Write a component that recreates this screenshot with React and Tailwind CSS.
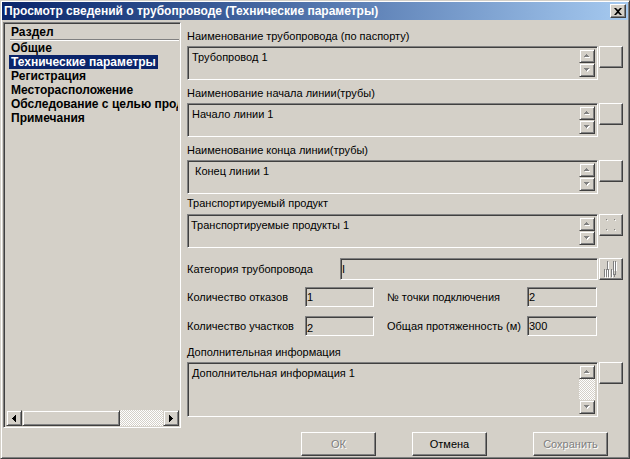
const sunken =
  "border border-t-[#808080] border-l-[#808080] border-b-white border-r-white shadow-[inset_1px_1px_0_#404040]"
const raised =
  "border border-t-white border-l-white border-b-[#404040] border-r-[#404040] shadow-[inset_-1px_-1px_0_#808080]"
const scrollBtn =
  "border border-t-[#d4d0c8] border-l-[#d4d0c8] border-b-[#404040] border-r-[#404040] shadow-[inset_1px_1px_0_#fff,inset_-1px_-1px_0_#808080]"
const checker =
  "bg-[image:repeating-conic-gradient(#ffffff_0_25%,#d4d0c8_0_50%)] bg-[length:2px_2px]"

const sections = [
  "Общие",
  "Технические параметры",
  "Регистрация",
  "Месторасположение",
  "Обследование с целью продления",
  "Примечания",
]

const UpArrow = () => (
  <svg width="6" height="4" viewBox="0 0 6 4">
    <path d="M3 1h1v1h1v1h1v1H1V3h1V2h1z" fill="#ffffff" />
    <path d="M2 0h1v1h1v1h1v1H0V2h1V1h1z" fill="#808080" />
  </svg>
)

const DownArrow = () => (
  <svg width="6" height="4" viewBox="0 0 6 4">
    <path d="M1 1h5v1H5v1H4v1H3V3H2V2H1z" fill="#ffffff" />
    <path d="M0 0h5v1H4v1H3v1H2V2H1V1H0z" fill="#808080" />
  </svg>
)

const ScrollButton = ({ children }) => (
  <div className={`${scrollBtn} w-[16px] h-[14px] bg-[#d4d0c8] flex items-center justify-center`}>
    {children}
  </div>
)

const SideButton = ({ children }) => (
  <button className={`${raised} ml-[1px] w-[24px] h-[22px] bg-[#d4d0c8] flex items-center justify-center`}>
    {children}
  </button>
)

const Label = ({ children, className = "" }) => (
  <div className={`h-[14px] leading-[14px] whitespace-nowrap ${className}`}>{children}</div>
)

const Memo = ({ text, tall = false, button = null, indent = "pl-[4px]" }) => (
  <div className="flex">
    <div
      className={`${sunken} ${tall ? "h-[55px]" : "h-[34px]"} w-[411px] flex items-start pt-[2px] pr-[2px] bg-[#d4d0c8]`}
    >
      <div className={`flex-1 ${indent} pt-[1px] leading-[14px] whitespace-nowrap`}>{text}</div>
      <div className="flex flex-col">
        <ScrollButton>
          <UpArrow />
        </ScrollButton>
        {tall && <div className={`${checker} w-[16px] h-[21px]`} />}
        <ScrollButton>
          <DownArrow />
        </ScrollButton>
      </div>
    </div>
    {button || <SideButton />}
  </div>
)

const Field = ({ value, className }) => (
  <div className={`${sunken} ${className} bg-[#d4d0c8] pl-[1px] flex items-center leading-[14px]`}>{value}</div>
)

const DotsIcon = () => (
  <svg width="10" height="12" viewBox="0 0 10 12">
    <rect x="1" y="1" width="1" height="1" fill="#ffffff" />
    <rect x="9" y="1" width="1" height="1" fill="#ffffff" />
    <rect x="1" y="11" width="1" height="1" fill="#ffffff" />
    <rect x="9" y="11" width="1" height="1" fill="#ffffff" />
    <rect x="0" y="0" width="1" height="1" fill="#808080" />
    <rect x="8" y="0" width="1" height="1" fill="#808080" />
    <rect x="0" y="10" width="1" height="1" fill="#808080" />
    <rect x="8" y="10" width="1" height="1" fill="#808080" />
  </svg>
)

const NumeralIcon = () => (
  <svg width="14" height="17" viewBox="0 0 14 17">
    <g fill="#ffffff">
      <rect x="4" y="1" width="1" height="9" />
      <rect x="10" y="1" width="1" height="9" />
      <rect x="12" y="1" width="1" height="9" />
      <rect x="1" y="9" width="1" height="8" />
      <rect x="3" y="9" width="1" height="8" />
      <rect x="5" y="9" width="1" height="8" />
      <rect x="8" y="9" width="1" height="8" />
    </g>
    <g fill="#808080">
      <rect x="3" y="0" width="1" height="9" />
      <rect x="9" y="0" width="1" height="9" />
      <rect x="11" y="0" width="1" height="9" />
      <rect x="0" y="8" width="1" height="8" />
      <rect x="2" y="8" width="1" height="8" />
      <rect x="4" y="8" width="1" height="8" />
      <rect x="7" y="8" width="1" height="8" />
      <path d="M9 8h1v5h1V8h1v6h-1v2h-1v-2H9z" />
    </g>
  </svg>
)

const DialogButton = ({ children, disabled = false, className = "" }) => (
  <button
    className={`${raised} ${className} w-[75px] h-[24px] bg-[#d4d0c8] flex items-center justify-center leading-[14px] font-normal ${
      disabled ? "text-[#808080] [text-shadow:1px_1px_0_#ffffff]" : "text-black"
    }`}
  >
    {children}
  </button>
)

export default function App() {
  return (
    <div className="w-[630px] h-[459px] bg-[#d4d0c8] border border-t-[#d4d0c8] border-l-[#d4d0c8] border-b-[#404040] border-r-[#404040] shadow-[inset_1px_1px_0_#fff,inset_-1px_-1px_0_#808080] p-[1px] font-['Liberation_Sans',Arial,sans-serif] text-[11px] text-black overflow-hidden">
      {/* title bar */}
      <div className="h-[18px] bg-linear-to-r from-[#0a246a] to-[#a6caf0] flex items-center pl-[2px] pr-[2px]">
        <span className="flex-1 text-white font-bold text-[12px] leading-[18px] whitespace-nowrap">
          Просмотр сведений о трубопроводе (Технические параметры)
        </span>
        <button className={`${raised} w-[16px] h-[14px] bg-[#d4d0c8] flex items-center justify-center`}>
          <svg width="8" height="7" viewBox="0 0 8 7">
            <path d="M0 0h2l2 2 2-2h2L5 3.5 8 7H6L4 5 2 7H0l3-3.5z" fill="#000" />
          </svg>
        </button>
      </div>

      <div className="flex mt-[2px]">
        {/* sections list */}
        <div className={`${sunken} ml-[1px] w-[178px] h-[406px] flex flex-col pl-[2px] pr-[1px] pt-[1px] pb-[1px]`}>
          <div className="h-[15px] flex items-end pl-[5px] font-bold text-[12px] leading-[14px]">Раздел</div>
          <div className="ml-[4px] h-[2px] border-t border-t-[#808080] border-b border-b-white" />
          <div className="w-[172px] flex flex-col pl-[3px] overflow-hidden font-bold text-[12px]">
            {sections.map((s, i) => (
              <div key={s} className="h-[14px] leading-[14px] whitespace-nowrap overflow-hidden">
                <span className={`inline-block px-[2px] ${i === 1 ? "bg-[#0a246a] text-white" : ""}`}>{s}</span>
              </div>
            ))}
          </div>
          <div className="flex-1" />
          <div className="flex h-[16px]">
            <div className={`${scrollBtn} w-[16px] h-[16px] bg-[#d4d0c8] flex items-center justify-center`}>
              <svg width="4" height="7" viewBox="0 0 4 7">
                <path d="M3 0h1v7H3V6H2V5H1V4H0V3h1V2h1V1h1z" fill="#000" />
              </svg>
            </div>
            <div className={`${scrollBtn} w-[98px] h-[16px] bg-[#d4d0c8]`} />
            <div className={`${checker} flex-1 h-[16px]`} />
            <div className={`${scrollBtn} w-[16px] h-[16px] bg-[#d4d0c8] flex items-center justify-center`}>
              <svg width="4" height="7" viewBox="0 0 4 7">
                <path d="M0 0h1v1h1v1h1v1h1v1H3v1H2v1H1v1H0z" fill="#000" />
              </svg>
            </div>
          </div>
        </div>

        {/* technical parameters */}
        <div className="ml-[6px] w-[436px] flex flex-col">
          <Label className="mt-[7px]">Наименование трубопровода (по паспорту)</Label>
          <div className="mt-[3px]">
            <Memo text="Трубопровод 1" />
          </div>

          <Label className="mt-[6px]">Наименование начала линии(трубы)</Label>
          <div className="mt-[3px]">
            <Memo text="Начало линии 1" />
          </div>

          <Label className="mt-[6px]">Наименование конца линии(трубы)</Label>
          <div className="mt-[3px]">
            <Memo text=" Конец линии 1" indent="pl-[7px]" />
          </div>

          <Label className="mt-[2px]">Транспортируемый продукт</Label>
          <div className="mt-[4px]">
            <Memo
              text="Транспортируемые продукты 1"
              indent="pl-[3px]"
              button={
                <SideButton>
                  <DotsIcon />
                </SideButton>
              }
            />
          </div>

          <div className="mt-[10px] flex items-center h-[22px]">
            <div className="w-[153px] leading-[14px]">Категория трубопровода</div>
            <Field value="I" className="w-[258px] h-[22px]" />
            <SideButton>
              <NumeralIcon />
            </SideButton>
          </div>

          <div className="mt-[7px] flex items-center h-[20px]">
            <div className="w-[118px] leading-[14px]">Количество отказов</div>
            <Field value="1" className="w-[69px] h-[20px]" />
            <div className="ml-[13px] w-[140px] leading-[14px]">№ точки подключения</div>
            <Field value="2" className="w-[70px] h-[20px]" />
          </div>

          <div className="mt-[9px] flex items-center h-[20px]">
            <div className="w-[118px] leading-[14px]">Количество участков</div>
            <Field value="2" className="w-[69px] h-[20px] pt-[3px]" />
            <div className="ml-[13px] w-[140px] leading-[14px]">Общая протяженность (м)</div>
            <Field value="300" className="w-[70px] h-[20px]" />
          </div>

          <Label className="mt-[9px]">Дополнительная информация</Label>
          <div className="mt-[3px]">
            <Memo text="Дополнительная информация 1" tall />
          </div>

          <div className="mt-[15px] flex">
            <DialogButton disabled className="ml-[114px]">
              ОК
            </DialogButton>
            <DialogButton className="ml-[36px]">Отмена</DialogButton>
            <DialogButton disabled className="ml-[46px]">
              Сохранить
            </DialogButton>
          </div>
        </div>
      </div>
    </div>
  )
}
